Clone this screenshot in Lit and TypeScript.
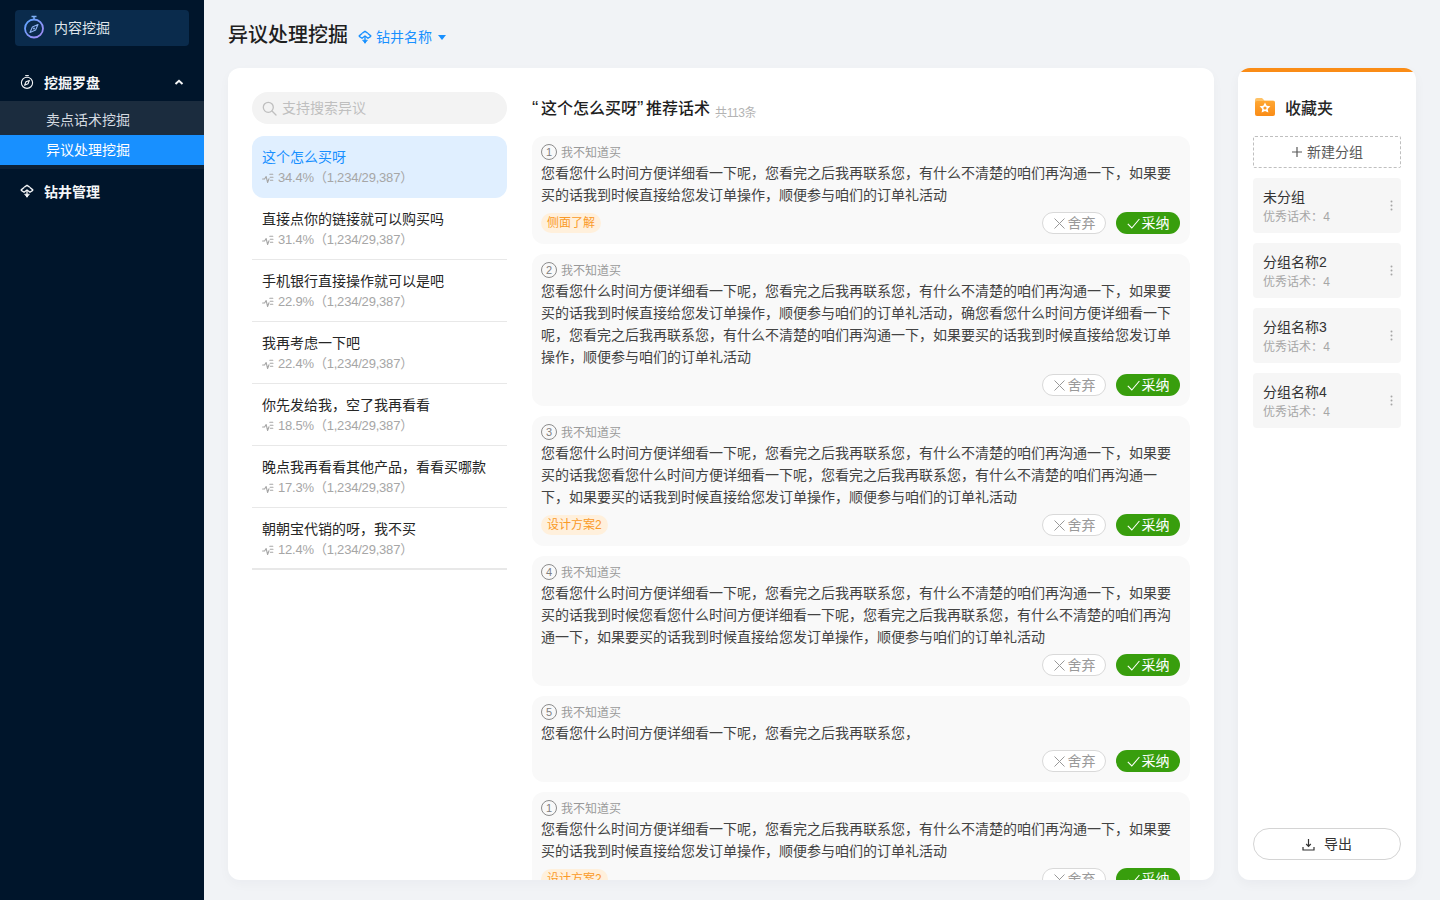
import { LitElement, html, css, svg } from "lit";
import { customElement } from "lit/decorators.js";

const A = "您看您什么时间方便详细看一下呢，您看完之后我再联系您，";
const B = "有什么不清楚的咱们再沟通一下，如果要";
const C = "买的话我到时候直接给您发订单操作，顺便参与咱们的订单礼活动";
const cards = [
  { n: 1, text: A + B + C, tag: "侧面了解" },
  { n: 2, text: A + B + C + "，确" + A + B + C },
  { n: 3, text: A + B + "买的话我" + A + B + C, tag: "设计方案2" },
  { n: 4, text: A + B + "买的话我到时候" + A + B + C },
  { n: 5, text: A },
  { n: 1, text: A + B + C, tag: "设计方案2" },
];
const items = [
  ["这个怎么买呀", "34.4%"],
  ["直接点你的链接就可以购买吗", "31.4%"],
  ["手机银行直接操作就可以是吧", "22.9%"],
  ["我再考虑一下吧", "22.4%"],
  ["你先发给我，空了我再看看", "18.5%"],
  ["晚点我再看看其他产品，看看买哪款", "17.3%"],
  ["朝朝宝代销的呀，我不买", "12.4%"],
];
const groups = ["未分组", "分组名称2", "分组名称3", "分组名称4"];

const drill = (cls: string) => svg`<svg class=${cls} viewBox="0 0 16 16" fill="none" stroke="currentColor" stroke-width="1.5" stroke-linejoin="round"><path d="M5 3.6 8 1.4l3 2.200"/><path d="M1 7 5 3.600M15 7l-4-3.400"/><path d="M1 7l3.600 2.400L8 6.800l3.400 2.600L15 7"/><path d="M8 7v8"/><path d="M5.200 11.600 8 15l2.800-3.400z" fill="currentColor" stroke-width=".8"/></svg>`;
const trend = svg`<svg class="trend" viewBox="0 0 12 12" fill="none" stroke="currentColor" stroke-width="1.100" stroke-linecap="round" stroke-linejoin="round"><path d="M.6 7h2l1.500-2.500L5.600 10.500 7 6.800"/><path d="M7.800 2.200h3M8.200 5.200h2.800M8.400 8.200h2.400"/></svg>`;

@customElement("app-root")
export class AppRoot extends LitElement {
  static styles = css`
    :host {
      display: flex;
      width: 1440px;
      height: 900px;
      overflow: hidden;
      background: #f1f3f6;
      color: #262626;
      font-family: "Liberation Sans", "Noto Sans CJK SC", sans-serif;
      font-size: 14px;
    }
    svg { display: block; flex: none; }
    .side { width: 204px; flex: none; background: #00152b; color: #fff; }
    .logo {
      margin: 10px 15px 20px;
      height: 36px;
      box-sizing: border-box;
      padding: 0 0 2px 9px;
      display: flex;
      align-items: center;
      gap: 10px;
      background: #0a2b4c;
      border-radius: 4px;
      color: #dfe4ea;
    }
    .logo svg { width: 20px; height: 24px; }
    .head {
      height: 34px;
      box-sizing: border-box;
      display: flex;
      align-items: center;
      padding: 0 0 2px 20px;
      gap: 10px;
      font-weight: 700;
      color: #f4f6f8;
    }
    .head .ico { width: 14px; height: 14px; }
    .chev { width: 10px; height: 6px; margin-left: auto; margin-right: 20px; }
    .sub { margin-top: 1px; background: #0d2136; padding-bottom: 4px; margin-bottom: 6px; }
    .sub div { padding-left: 46px; color: #d5dae0; }
    .sub .a { height: 34px; line-height: 38px; background: #1b2c3e; }
    .sub .b { height: 30px; line-height: 30px; background: #1890ff; color: #fff; }
    .main { flex: 1; min-width: 0; padding-left: 24px; display: flex; flex-direction: column; }
    .top { height: 68px; display: flex; align-items: center; flex: none; }
    h1 { margin: 2px 10px 0 0; font-size: 20px; font-weight: 500; color: #1f1f1f; line-height: 28px; }
    .well { display: flex; align-items: center; margin-top: 4px; color: #1890ff; gap: 4px; }
    .well .dr { width: 14px; height: 14px; margin-top: 2px; }
    .well .car { width: 8px; height: 5px; margin-left: 2px; margin-top: 2px; }
    .cols { display: flex; gap: 24px; height: 812px; }
    .panel {
      width: 986px;
      flex: none;
      height: 812px;
      box-sizing: border-box;
      background: #fff;
      border-radius: 12px;
      overflow: hidden;
      display: flex;
      gap: 25px;
      padding: 24px 24px 0;
      box-shadow: 0 4px 12px rgba(0, 20, 50, 0.03);
    }
    .left { width: 255px; flex: none; }
    .search {
      height: 32px;
      box-sizing: border-box;
      border-radius: 16px;
      background: #f3f3f3;
      color: #bfbfbf;
      display: flex;
      align-items: center;
      gap: 5px;
      padding: 0 0 2px 10px;
      margin-bottom: 12px;
    }
    .search svg { width: 15px; height: 15px; margin-top: 2px; }
    .item { height: 62px; box-sizing: border-box; padding: 10px 10px 0; border-bottom: 1px solid #e8e8e8; }
    .item.on { background: #e0efff; border-radius: 12px; border-bottom: 0; }
    .item.on .t { color: #1890ff; }
    .item:last-child { border-bottom: 2px solid #e8e8e8; }
    .t { line-height: 22px; color: #262626; }
    .m { line-height: 20px; font-size: 13px; color: #a6a6a6; display: flex; align-items: center; gap: 4px; letter-spacing: -0.2px; }
    .trend { width: 12px; height: 12px; }
    .mid { width: 658px; flex: none; }
    .mt { display: flex; align-items: center; height: 44px; box-sizing: border-box; gap: 5px; line-height: 24px; padding-bottom: 10px; }
    .mt b { font-size: 16px; font-weight: 500; color: #1f1f1f; }
    .q { display: inline-block; width: 9px; font-size: 19px; line-height: 1; }
    .cnt { font-size: 12px; color: #b3b3b3; margin-top: 8px; letter-spacing: -0.4px; }
    .card {
      background: #f9f9f9;
      border-radius: 12px;
      padding: 6px 10px 10px 9px;
      margin-bottom: 10px;
    }
    .ch { height: 20px; display: flex; align-items: center; gap: 4px; font-size: 12px; color: #999; }
    .lift { margin-bottom: 2px; }
    .num {
      width: 14px;
      height: 14px;
      border: 1px solid #8c8c8c;
      border-radius: 50%;
      display: flex;
      align-items: center;
      justify-content: center;
      font-size: 11px;
      color: #808080;
    }
    .txt { line-height: 22px; color: #434343; }
    .foot { margin-top: 6px; height: 22px; display: flex; align-items: center; gap: 10px; }
    .tag {
      height: 20px;
      line-height: 20px;
      padding: 0 6px;
      border-radius: 10px;
      background: #fff0dc;
      color: #fa9a28;
      font-size: 12px;
    }
    .sp { flex: 1; }
    .btn {
      width: 64px;
      height: 22px;
      box-sizing: border-box;
      border-radius: 11px;
      display: flex;
      align-items: center;
      justify-content: center;
      gap: 2px;
    }
    .btn svg { width: 13px; height: 13px; }
    .no { background: #fff; border: 1px solid #d9d9d9; color: #999; }
    .ok { background: #389e0d; color: #fff; }
    .right {
      width: 178px;
      flex: none;
      height: 812px;
      box-sizing: border-box;
      background: linear-gradient(#fa8c16 4px, #fff 4px);
      border-radius: 12px;
      padding: 4px 15px 0;
      display: flex;
      flex-direction: column;
      box-shadow: 0 4px 12px rgba(0, 20, 50, 0.04);
    }
    .rh { height: 64px; box-sizing: border-box; padding: 6px 0 0 1px; display: flex; align-items: center; gap: 9px; font-size: 16px; font-weight: 500; color: #262626; flex: none; }
    .rh svg { width: 22px; height: 20px; }
    .new {
      height: 32px;
      box-sizing: border-box;
      border: 1px dashed #bfbfbf;
      border-radius: 2px;
      color: #595959;
      display: flex;
      align-items: center;
      justify-content: center;
      gap: 4px;
      margin-bottom: 10px;
      flex: none;
    }
    .new svg { width: 12px; height: 12px; }
    .g {
      height: 55px;
      box-sizing: border-box;
      background: #f6f6f6;
      border-radius: 4px;
      padding: 8px 10px 0;
      margin-bottom: 10px;
      display: flex;
      align-items: center;
      flex: none;
    }
    .g > div { flex: 1; margin-top: -8px; }
    .gn { line-height: 22px; color: #333; }
    .gs { line-height: 18px; font-size: 12px; color: #a6a6a6; word-spacing: -3px; }
    .dots { width: 3px; height: 11px; margin-right: -2px; margin-top: -8px; }
    .exp {
      margin-top: auto;
      margin-bottom: 20px;
      height: 32px;
      box-sizing: border-box;
      border: 1px solid #d4d4d4;
      border-radius: 16px;
      display: flex;
      align-items: center;
      justify-content: center;
      gap: 9px;
      color: #333;
      flex: none;
    }
    .exp svg { width: 13px; height: 13px; }
  `;

  render() {
    return html`
      <div class="side">
        <div class="logo">
          <svg viewBox="0 0 20 24" fill="none">
            <defs><linearGradient id="lg" x1="0" y1="0" x2="1" y2="1"><stop offset="0" stop-color="#5aa5ff"/><stop offset="1" stop-color="#a98bf5"/></linearGradient></defs>
            <path d="M7.500 1.500h5M10 1.500v2.500" stroke="#7fb0f5" stroke-width="1.500"/>
            <circle cx="10" cy="13.500" r="9" stroke="url(#lg)" stroke-width="1.800"/>
            <path d="M14 9.500 11.600 15 6 17.500 8.400 12z" stroke="#8fb3f2" stroke-width="1.100" stroke-linejoin="round"/>
            <circle cx="10" cy="13.500" r="1" fill="#8fb3f2"/>
          </svg>
          内容挖掘
        </div>
        <div class="head">
          <svg class="ico" viewBox="0 0 14 14" fill="none" stroke="currentColor" stroke-width="1.100"><path d="M5.200.6h3.600"/><circle cx="7" cy="7.800" r="5.600"/><path d="M9.400 5.400 8 8.800 4.600 10.200 6 6.800z" stroke-linejoin="round"/></svg>
          挖掘罗盘
          <svg class="chev" viewBox="0 0 10 6" fill="none" stroke="currentColor" stroke-width="2"><path d="M1.500 5 5 1.800 8.500 5"/></svg>
        </div>
        <div class="sub"><div class="a">卖点话术挖掘</div><div class="b">异议处理挖掘</div></div>
        <div class="head">${drill("ico")}钻井管理</div>
      </div>
      <div class="main">
        <div class="top">
          <h1>异议处理挖掘</h1>
          <div class="well">
            ${drill("dr")}钻井名称
            <svg class="car" viewBox="0 0 8 5"><path d="M0 0h8L4 5z" fill="currentColor"/></svg>
          </div>
        </div>
        <div class="cols">
          <div class="panel">
            <div class="left">
              <div class="search">
                <svg viewBox="0 0 15 15" fill="none" stroke="#bfbfbf" stroke-width="1.300"><circle cx="6.300" cy="6.300" r="5"/><path d="m10 10 4 4" stroke-linecap="round"/></svg>
                支持搜索异议
              </div>
              ${items.map(
                (it, i) => html`<div class="item ${i === 0 ? "on" : ""}">
                  <div class="t">${it[0]}</div>
                  <div class="m">${trend}<span>${it[1]}（1,234/29,387）</span></div>
                </div>`
              )}
            </div>
            <div class="mid">
              <div class="mt">
                <b><span class="q">“</span>这个怎么买呀<span class="q">”</span>推荐话术</b>
                <span class="cnt">共113条</span>
              </div>
              ${cards.map(
                (c) => html`<div class="card">
                  <div class="ch"><span class="num">${c.n}</span><span class="lift">我不知道买</span></div>
                  <div class="txt">${c.text}</div>
                  <div class="foot">
                    ${c.tag ? html`<span class="tag">${c.tag}</span>` : ""}
                    <span class="sp"></span>
                    <div class="btn no"><svg viewBox="0 0 13 13" fill="none" stroke="#999" stroke-width="1"><path d="m1.500 1.500 10 10M11.500 1.500l-10 10"/></svg><span class="lift">舍弃</span></div>
                    <div class="btn ok"><svg viewBox="0 0 13 13" fill="none" stroke="#fff" stroke-width="1.100"><path d="M.8 6.800 4.800 11 12.400 2"/></svg><span class="lift">采纳</span></div>
                  </div>
                </div>`
              )}
            </div>
          </div>
          <div class="right">
            <div class="rh">
              <svg viewBox="0 0 22 20"><defs><linearGradient id="fg" x1="0" y1="0" x2="0" y2="1"><stop offset="0" stop-color="#ffa733"/><stop offset="1" stop-color="#fa8c16"/></linearGradient></defs><path d="M1 3a2 2 0 0 1 2-2h5l2.500 2.500H19a2 2 0 0 1 2 2V8H1z" fill="#ffc266"/><path d="M1 6a2 2 0 0 1 2-2h16a2 2 0 0 1 2 2v11a2 2 0 0 1-2 2H3a2 2 0 0 1-2-2z" fill="url(#fg)"/><path d="m11 5.500 1.700 3.300 3.700.5-2.700 2.600.7 3.700L11 13.900l-3.400 1.700.7-3.700-2.700-2.600 3.700-.5z" fill="#fff"/><circle cx="11" cy="11" r="1.600" fill="#fa9a28"/></svg>
              收藏夹
            </div>
            <div class="new">
              <svg viewBox="0 0 12 12" stroke="#595959" stroke-width="1.200"><path d="M6 1v10M1 6h10"/></svg>
              <span class="lift">新建分组</span>
            </div>
            ${groups.map(
              (g) => html`<div class="g">
                <div><div class="gn">${g}</div><div class="gs">优秀话术： 4</div></div>
                <svg class="dots" viewBox="0 0 3 11" fill="#a6a6a6"><circle cx="1.500" cy="1.500" r="1"/><circle cx="1.500" cy="5.500" r="1"/><circle cx="1.500" cy="9.500" r="1"/></svg>
              </div>`
            )}
            <div class="exp">
              <svg viewBox="0 0 13 13" fill="none" stroke="#333" stroke-width="1.200"><path d="M6.500 1v7M4.200 6 6.500 8.300 8.800 6M1 9v3h11V9"/></svg>
              <span class="lift">导出</span>
            </div>
          </div>
        </div>
      </div>
    `;
  }
}
